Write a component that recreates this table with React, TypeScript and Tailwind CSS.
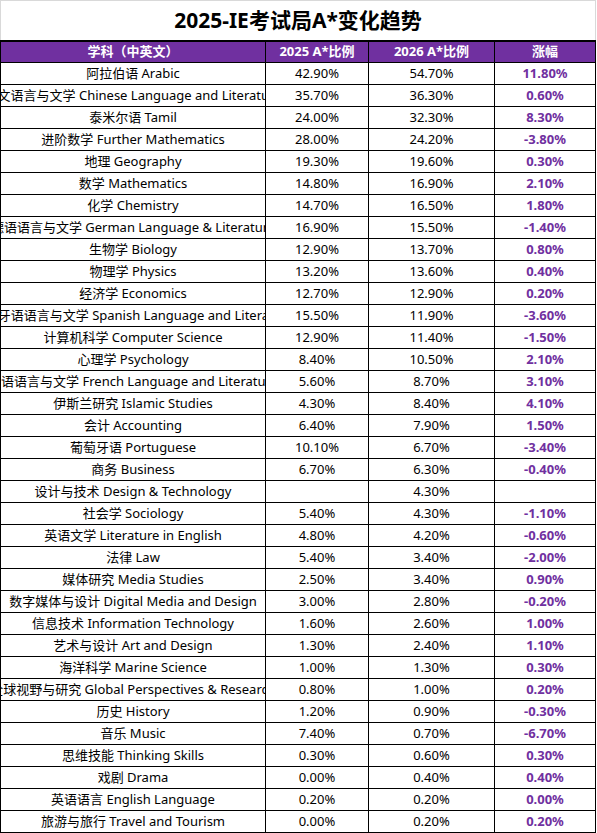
const rows: [string, string, string, string][] = [
  ["阿拉伯语 Arabic", "42.90%", "54.70%", "11.80%"],
  ["中文语言与文学 Chinese Language and Literature", "35.70%", "36.30%", "0.60%"],
  ["泰米尔语 Tamil", "24.00%", "32.30%", "8.30%"],
  ["进阶数学 Further Mathematics", "28.00%", "24.20%", "-3.80%"],
  ["地理 Geography", "19.30%", "19.60%", "0.30%"],
  ["数学 Mathematics", "14.80%", "16.90%", "2.10%"],
  ["化学 Chemistry", "14.70%", "16.50%", "1.80%"],
  ["德语语言与文学 German Language & Literature", "16.90%", "15.50%", "-1.40%"],
  ["生物学 Biology", "12.90%", "13.70%", "0.80%"],
  ["物理学 Physics", "13.20%", "13.60%", "0.40%"],
  ["经济学 Economics", "12.70%", "12.90%", "0.20%"],
  ["西班牙语语言与文学 Spanish Language and Literature", "15.50%", "11.90%", "-3.60%"],
  ["计算机科学 Computer Science", "12.90%", "11.40%", "-1.50%"],
  ["心理学 Psychology", "8.40%", "10.50%", "2.10%"],
  ["法语语言与文学 French Language and Literature", "5.60%", "8.70%", "3.10%"],
  ["伊斯兰研究 Islamic Studies", "4.30%", "8.40%", "4.10%"],
  ["会计 Accounting", "6.40%", "7.90%", "1.50%"],
  ["葡萄牙语 Portuguese", "10.10%", "6.70%", "-3.40%"],
  ["商务 Business", "6.70%", "6.30%", "-0.40%"],
  ["设计与技术 Design & Technology", "", "4.30%", ""],
  ["社会学 Sociology", "5.40%", "4.30%", "-1.10%"],
  ["英语文学 Literature in English", "4.80%", "4.20%", "-0.60%"],
  ["法律 Law", "5.40%", "3.40%", "-2.00%"],
  ["媒体研究 Media Studies", "2.50%", "3.40%", "0.90%"],
  ["数字媒体与设计 Digital Media and Design", "3.00%", "2.80%", "-0.20%"],
  ["信息技术 Information Technology", "1.60%", "2.60%", "1.00%"],
  ["艺术与设计 Art and Design", "1.30%", "2.40%", "1.10%"],
  ["海洋科学 Marine Science", "1.00%", "1.30%", "0.30%"],
  ["全球视野与研究 Global Perspectives & Research", "0.80%", "1.00%", "0.20%"],
  ["历史 History", "1.20%", "0.90%", "-0.30%"],
  ["音乐 Music", "7.40%", "0.70%", "-6.70%"],
  ["思维技能 Thinking Skills", "0.30%", "0.60%", "0.30%"],
  ["戏剧 Drama", "0.00%", "0.40%", "0.40%"],
  ["英语语言 English Language", "0.20%", "0.20%", "0.00%"],
  ["旅游与旅行 Travel and Tourism", "0.00%", "0.20%", "0.20%"],
];

const base =
  "border-r border-b border-black flex items-center justify-center overflow-hidden whitespace-nowrap";
const cell = `h-[22px] ${base}`;
const head = `h-[21px] ${base} bg-[#7030a0] text-white font-bold`;

export default function App() {
  return (
    <div
      className="w-[597px] h-[833px] bg-white text-black text-[13px]"
      style={{ fontFamily: "'Noto Sans', 'Noto Sans CJK SC', sans-serif" }}
    >
      <div className="w-[596px] h-[40px] border-t border-l border-r border-[#d9d9d9] flex items-center justify-center">
        <h1 className="text-[21px] font-bold leading-none">2025-IE考试局A*变化趋势</h1>
      </div>
      <div className="w-[596px] grid grid-cols-[265px_103px_126px_101px] border-l border-t-2 border-black">
        <div className={head}>学科（中英文）</div>
        <div className={head}>2025 A*比例</div>
        <div className={head}>2026 A*比例</div>
        <div className={head}>涨幅</div>
        {rows.map(([name, a, b, d]) => (
          <div key={name} className="contents">
            <div className={cell}>
              <span className="shrink-0">{name}</span>
            </div>
            <div className={cell}>{a}</div>
            <div className={cell}>{b}</div>
            <div className={`${cell} text-[#7030a0] font-bold`}>{d}</div>
          </div>
        ))}
      </div>
    </div>
  );
}
